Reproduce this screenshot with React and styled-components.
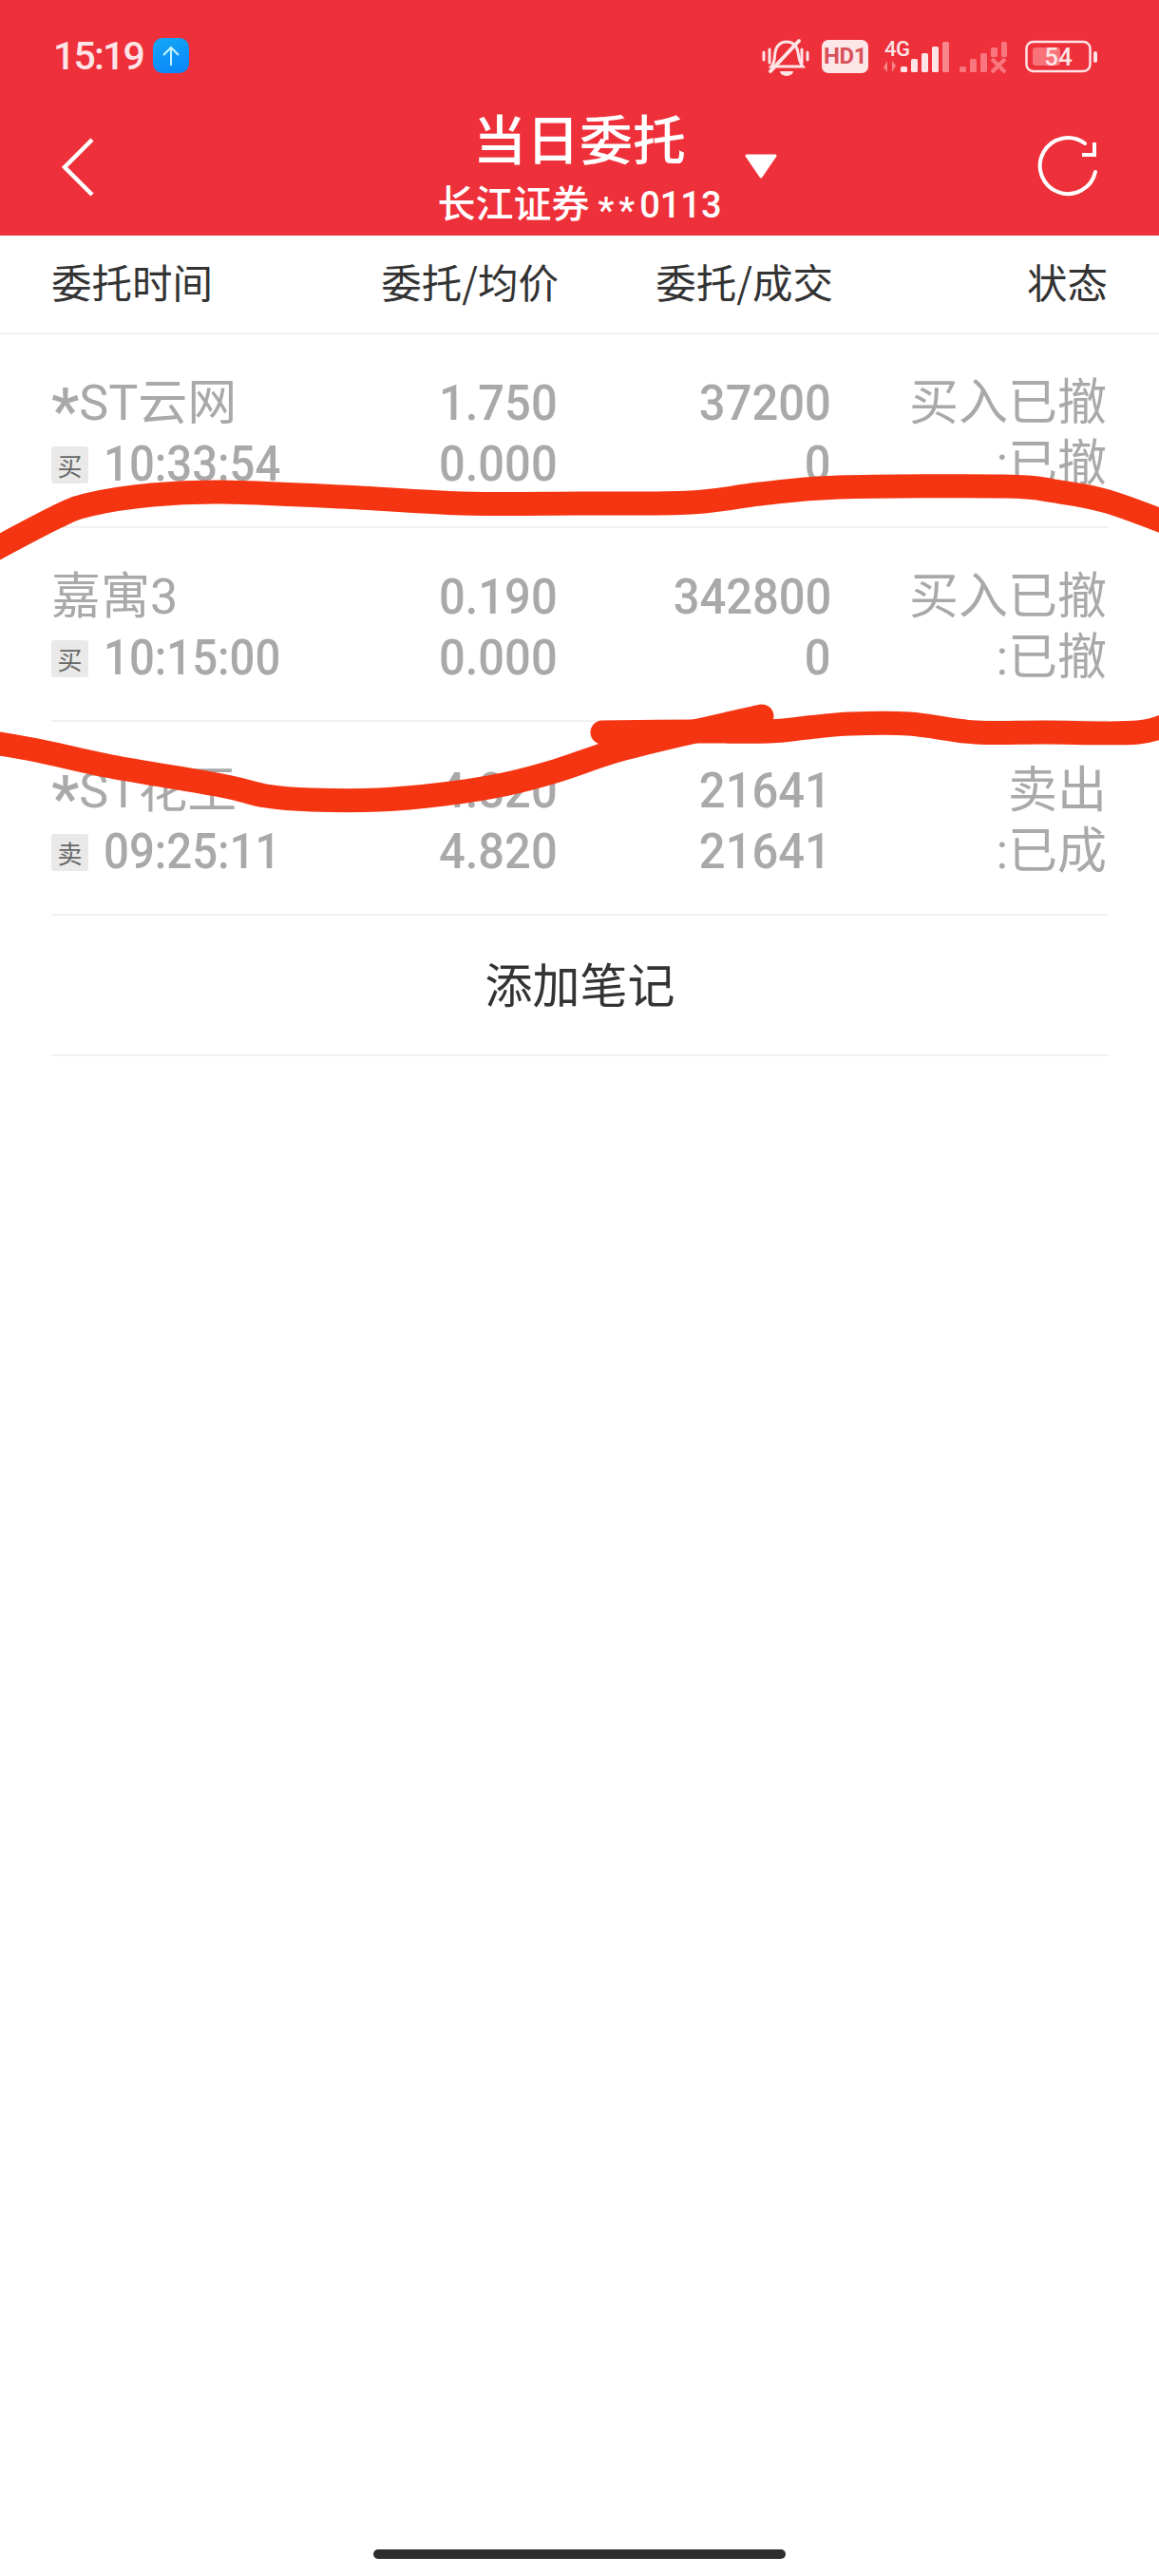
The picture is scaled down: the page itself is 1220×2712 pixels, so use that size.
import React from 'react';
import styled, { createGlobalStyle } from 'styled-components';

const Global = createGlobalStyle`
  html, body { margin: 0; padding: 0; background: #fff; }
  * { box-sizing: border-box; }
`;

const CJK = '"Noto Sans CJK SC", sans-serif';

const Page = styled.div`
  position: relative;
  width: 1220px;
  height: 2712px;
  display: flex;
  flex-direction: column;
  background: #fff;
  overflow: hidden;
  font-family: ${CJK};
`;

const Header = styled.header`
  background: #ee303b;
  color: #fff;
  flex: none;
`;

const StatusBar = styled.div`
  height: 100px;
  padding: 40px 0 0 56px;
  display: flex;
  align-items: flex-start;
`;

const Clock = styled.span`
  font: 500 41px/38px Roboto, sans-serif;
  color: #fde4e6;
  width: 105px;
  letter-spacing: -1.8px;
`;

const UploadBadge = styled.span`
  width: 38px;
  height: 37px;
  border-radius: 10px;
  background: linear-gradient(160deg, #12a8f5, #0a84fb);
  display: flex;
  align-items: center;
  justify-content: center;
`;

const Indicators = styled.div`
  margin-left: auto;
  width: 370px;
  height: 40px;
  flex: none;
  margin-right: 50px;
`;

const NavBar = styled.div`
  height: 148px;
  display: grid;
  grid-template-columns: 1fr auto 1fr;
  align-items: center;
`;

const BackCell = styled.div`
  padding-left: 62px;
  display: flex;
  align-items: center;
  padding-top: 4px;
`;

const TitleBlock = styled.div`
  padding-top: 2px;
  text-align: center;
`;

const Title = styled.div`
  font-size: 56px;
  line-height: 64px;
  font-weight: 500;
`;

const Subtitle = styled.div`
  margin-top: 14px;
  font-size: 40px;
  line-height: 44px;
  white-space: nowrap;
  font-weight: 500;
`;

const Account = styled.span`
  font-family: Roboto, sans-serif;
  font-size: 38px;
`;

const AccountMask = styled.span`
  position: relative;
  top: 6px;
  letter-spacing: 5px;
`;

const NameStar = styled.span`
  position: relative;
  top: 14px;
  font-size: 66px;
  line-height: 40px;
  font-weight: 500;
`;

const RightCell = styled.div`
  display: flex;
  align-items: center;
  padding: 2px 64px 0 23px;
  justify-content: space-between;
`;

const TableHead = styled.div`
  height: 104px;
  flex: none;
  display: grid;
  grid-template-columns: 1fr 240px 289px 289px;
  align-items: center;
  padding: 0 54px 6px 54px;
  border-bottom: 2px solid #f0f0f0;
`;

const HeadCell = styled.div`
  font-size: 42.5px;
  line-height: 52px;
  color: #333;
  text-align: ${p => (p.$left ? 'left' : 'right')};
`;

const Row = styled.div`
  margin: 0 53px 0 54px;
  height: 204px;
  flex: none;
  padding: 41px 2px 0 0;
  display: grid;
  grid-template-columns: 1fr 240px 288px 290px;
  grid-auto-rows: 64px;
  align-items: center;
  border-bottom: 2px solid #f0f0f0;
`;

const Cell = styled.div`
  font-family: Roboto, ${CJK};
  font-size: 52px;
  line-height: 64px;
  color: #a9a9a9;
  white-space: nowrap;
  text-align: ${p => (p.$left ? 'left' : 'right')};
`;

// The quote font is a condensed numeral face, so digits are narrowed from their own edge.
const Digits = styled.span`
  display: inline-block;
  font-weight: 500;
  transform: scaleX(${p => (p.$left ? 0.91 : 0.94)});
  transform-origin: ${p => (p.$left ? 'left' : 'right')} center;
`;

const TimeCell = styled.div`
  display: flex;
  align-items: center;
  gap: 16px;
`;

const SideTag = styled.span`
  width: 39px;
  height: 39px;
  flex: none;
  border-radius: 3px;
  background: #e9e9e9;
  color: #666;
  font: 400 26px/39px ${CJK};
  text-align: center;
`;

const AddNote = styled.div`
  margin: 0 53px 0 54px;
  height: 148px;
  flex: none;
  display: flex;
  align-items: center;
  justify-content: center;
  padding-bottom: 6px;
  font-size: 50px;
  color: #333;
  border-bottom: 2px solid #f0f0f0;
`;

const HomeBar = styled.div`
  width: 434px;
  height: 10px;
  border-radius: 5px;
  background: #2e2e2e;
  margin: auto auto 18px;
  flex: none;
`;

const Scribble = styled.svg`
  position: absolute;
  inset: 0;
  pointer-events: none;
`;

const orders = [
  { star: true, name: 'ST云网', side: '买', time: '10:33:54', price: '1.750', avg: '0.000', qty: '37200', done: '0', act: '买入已撤', state: ':已撤' },
  { name: '嘉寓3', side: '买', time: '10:15:00', price: '0.190', avg: '0.000', qty: '342800', done: '0', act: '买入已撤', state: ':已撤' },
  { star: true, name: 'ST花王', side: '卖', time: '09:25:11', price: '4.820', avg: '4.820', qty: '21641', done: '21641', act: '卖出', state: ':已成' },
];

// Catmull-Rom through the pen points, so a marker stroke can be listed as plain coordinates.
const smooth = pts => {
  let d = `M${pts[0][0]} ${pts[0][1]}`;
  for (let i = 0; i < pts.length - 1; i++) {
    const p0 = pts[i - 1] || pts[i];
    const p1 = pts[i];
    const p2 = pts[i + 1];
    const p3 = pts[i + 2] || p2;
    d += `C${p1[0] + (p2[0] - p0[0]) / 6} ${p1[1] + (p2[1] - p0[1]) / 6} ${p2[0] - (p3[0] - p1[0]) / 6} ${p2[1] - (p3[1] - p1[1]) / 6} ${p2[0]} ${p2[1]}`;
  }
  return d;
};

const topStroke = [[-20, 586], [58, 545], [95, 531], [160, 521], [233, 518], [360, 523], [486, 530], [610, 530], [727, 529], [800, 520], [882, 513], [1057, 512], [1110, 517], [1166, 528], [1240, 555]];
const leftStroke = [[-20, 780], [39, 790], [117, 807], [233, 827], [280, 838], [327, 842], [400, 842], [467, 836], [530, 826], [584, 812], [650, 790], [731, 770], [802, 754]];
const rightStroke = [[634, 771], [731, 770], [809, 770], [850, 766], [895, 762], [957, 762], [1027, 771], [1100, 771], [1198, 771], [1240, 758]];

// Status bar glyphs: muted bell, HD badge, two SIM signals and the battery.
const StatusIcons = () => (
  <svg width="370" height="40" viewBox="800 40 370 40">
    <g fill="none" stroke="#fde4e6" strokeLinecap="round">
      <path d="M812 70c4-4 3-10 4-15 1-7 6-11 12-11s11 4 12 11c1 6 1 10 5 15z" strokeWidth="3" />
      <path d="M811 75 841 43" strokeWidth="4" />
      <path d="M810 52v14M804 55v8M844 52v14M850 55v8" strokeWidth="3" />
    </g>
    <path d="M821 75h14a7 5 0 0 1-14 0z" fill="#fde4e6" />
    <rect x="865" y="42" width="49" height="35" rx="7" fill="#fde6e8" />
    <text x="889.5" y="67" textAnchor="middle" fontFamily="Roboto, sans-serif" fontWeight="700" fontSize="24" letterSpacing="-0.5" fill="#d9515a">HD1</text>
    <text x="931" y="59" fontFamily="Roboto, sans-serif" fontWeight="500" fontSize="22" letterSpacing="-0.5" fill="#fde4e6">4G</text>
    <path d="M934 64v12l-4-5zM939 76V64l4 5z" fill="#f9868c" />
    <g fill="#fde4e6">
      <rect x="948" y="70" width="7" height="6" rx="1.5" />
      <rect x="959" y="62" width="7" height="14" rx="1.5" />
      <rect x="970" y="56" width="7" height="20" rx="1.5" />
      <rect x="981" y="49" width="7" height="27" rx="1.5" />
    </g>
    <rect x="992" y="44" width="7" height="32" rx="1.5" fill="#f9868c" />
    <g fill="#f9767e">
      <rect x="1010" y="70" width="7" height="6" rx="1.5" />
      <rect x="1021" y="62" width="7" height="14" rx="1.5" />
      <rect x="1032" y="56" width="7" height="20" rx="1.5" />
      <rect x="1043" y="50" width="7" height="10" rx="1.5" />
      <rect x="1054" y="44" width="6" height="16" rx="1.5" />
      <path d="M1044 62l14 14M1058 62l-14 14" stroke="#f9767e" strokeWidth="4" fill="none" />
    </g>
    <rect x="1080.5" y="44" width="67" height="31" rx="7" fill="none" stroke="#fde4e6" strokeWidth="2.5" />
    <rect x="1087" y="50" width="29" height="19" rx="3" fill="#f8727a" />
    <rect x="1151" y="54" width="4" height="12" rx="2" fill="#fde4e6" />
    <text x="1114" y="69" textAnchor="middle" fontFamily="Roboto, sans-serif" fontWeight="500" fontSize="26" fill="#fde4e6">54</text>
  </svg>
);

const BackIcon = () => (
  <svg width="38" height="64" viewBox="0 0 38 64">
    <path d="M35 3 6 32l29 29" fill="none" stroke="#fff" strokeWidth="4.5" />
  </svg>
);

const CaretIcon = () => (
  <svg width="36" height="28" viewBox="0 0 36 28">
    <path d="M3 3h30L18 25z" fill="#fff" stroke="#fff" strokeWidth="3" strokeLinejoin="round" />
  </svg>
);

const RefreshIcon = () => (
  <svg width="64" height="66" viewBox="0 0 64 66">
    <path d="M61 39A29.5 29.5 0 1 1 50 9" fill="none" stroke="#fff" strokeWidth="4" strokeLinecap="round" />
    <path d="M60 8v13H47" fill="none" stroke="#fff" strokeWidth="4" />
  </svg>
);

export default function App() {
  return (
    <Page>
      <Global />
      <Header>
        <StatusBar>
          <Clock>15:19</Clock>
          <UploadBadge>
            <svg width="22" height="24" viewBox="0 0 22 24">
              <path d="M11 22V3M3 11l8-8 8 8" fill="none" stroke="#c8f2ff" strokeWidth="2" />
            </svg>
          </UploadBadge>
          <Indicators><StatusIcons /></Indicators>
        </StatusBar>
        <NavBar>
          <BackCell><BackIcon /></BackCell>
          <TitleBlock>
            <Title>当日委托</Title>
            <Subtitle>长江证券 <Account><AccountMask>**</AccountMask>0113</Account></Subtitle>
          </TitleBlock>
          <RightCell>
            <CaretIcon />
            <RefreshIcon />
          </RightCell>
        </NavBar>
      </Header>

      <TableHead>
        <HeadCell $left>委托时间</HeadCell>
        <HeadCell>委托/均价</HeadCell>
        <HeadCell>委托/成交</HeadCell>
        <HeadCell>状态</HeadCell>
      </TableHead>

      {orders.map(o => (
        <Row key={o.time}>
          <Cell $left>{o.star && <NameStar>*</NameStar>}{o.name}</Cell>
          <Cell><Digits>{o.price}</Digits></Cell>
          <Cell><Digits>{o.qty}</Digits></Cell>
          <Cell>{o.act}</Cell>
          <TimeCell>
            <SideTag>{o.side}</SideTag>
            <Cell $left><Digits $left>{o.time}</Digits></Cell>
          </TimeCell>
          <Cell><Digits>{o.avg}</Digits></Cell>
          <Cell><Digits>{o.done}</Digits></Cell>
          <Cell>{o.state}</Cell>
        </Row>
      ))}

      <AddNote>添加笔记</AddNote>
      <HomeBar />

      {/* Hand-drawn marker loop around the second order */}
      <Scribble width="1220" height="2712" viewBox="0 0 1220 2712">
        <g fill="none" stroke="#f53512" strokeWidth="25" strokeLinecap="round" strokeLinejoin="round">
          <path d={smooth(topStroke)} />
          <path d={smooth(leftStroke)} />
          <path d={smooth(rightStroke)} />
        </g>
      </Scribble>
    </Page>
  );
}
